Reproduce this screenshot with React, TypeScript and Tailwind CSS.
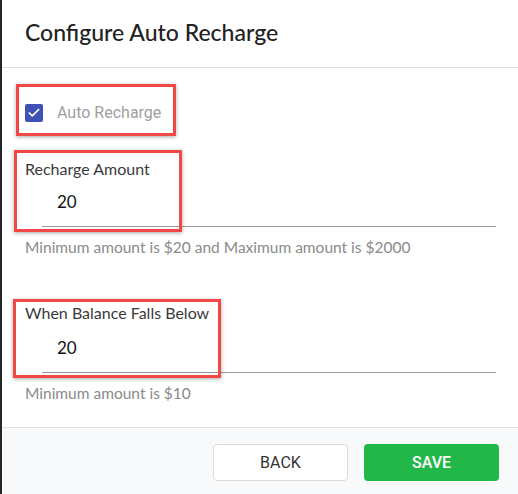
import { Check } from 'lucide-react'

const lato = "font-['Lato','Liberation_Sans',sans-serif]"
const roboto = "font-['Roboto','Liberation_Sans',sans-serif]"

function Highlight({ className }: { className: string }) {
  return (
    <div
      className={`absolute border-[3px] border-[#f24747] shadow-[0_1px_4px_rgba(0,0,0,0.35)] pointer-events-none ${className}`}
    />
  )
}

export default function App() {
  return (
    <div className="relative w-[518px] h-[494px] bg-white overflow-hidden">
      <div className="flex flex-col h-full border-l-2 border-[#262626]">
        {/* Header */}
        <div className="h-[68px] shrink-0 border-b border-[#dedede] pl-[23px] flex items-center">
          <h1 className={`${lato} text-[23px] font-medium text-[#222] leading-none -mt-[2px]`}>
            Configure Auto Recharge
          </h1>
        </div>

        {/* Body */}
        <div className="flex-1 pl-[23px] pr-[20px] pt-[33px]">
          <label className="flex items-center h-[24px]">
            <span className="w-[18px] h-[18px] rounded-[2px] bg-[#3f51b5] flex items-center justify-center">
              <Check size={14} strokeWidth={3} className="text-white" />
            </span>
            <span className={`${roboto} ml-[14px] text-[16px] text-[#a0a0a0]`}>Auto Recharge</span>
          </label>

          <div className={`${lato} mt-[34px] text-[16px] leading-[20px] text-[#3a3a3a]`}>Recharge Amount</div>
          <div className="mt-[5px] ml-[17px] w-[454px] border-b border-[#999] pt-[6px] pb-[12px] pl-[15px]">
            <span className={`${lato} text-[17px] leading-[24px] text-[#111]`}>20</span>
          </div>
          <div className={`${lato} mt-[10px] text-[15.5px] leading-[20px] text-[#8a8a8a]`}>
            Minimum amount is $20 and Maximum amount is $2000
          </div>

          <div className={`${lato} mt-[46px] text-[16px] leading-[20px] text-[#3a3a3a]`}>When Balance Falls Below</div>
          <div className="mt-[7px] ml-[17px] w-[454px] border-b border-[#999] pt-[6px] pb-[12px] pl-[15px]">
            <span className={`${lato} text-[17px] leading-[24px] text-[#111]`}>20</span>
          </div>
          <div className={`${lato} mt-[10px] text-[15.5px] leading-[20px] text-[#8a8a8a]`}>
            Minimum amount is $10
          </div>
        </div>

        {/* Footer */}
        <div className="h-[67px] shrink-0 border-t border-[#dedede] bg-[#f8f9fa] flex justify-end items-start pt-[16px] pr-[19px] gap-[16px]">
          <button className={`${roboto} w-[135px] h-[37px] rounded-[4px] border border-[#dcdcdc] bg-white text-[16px] text-[#333]`}>
            BACK
          </button>
          <button className={`${roboto} w-[135px] h-[37px] rounded-[4px] bg-[#21b849] text-[16px] font-medium text-white`}>
            SAVE
          </button>
        </div>
      </div>

      <Highlight className="left-[16px] top-[84px] w-[160px] h-[52px]" />
      <Highlight className="left-[14px] top-[150px] w-[168px] h-[82px]" />
      <Highlight className="left-[13px] top-[299px] w-[208px] h-[79px]" />
    </div>
  )
}
